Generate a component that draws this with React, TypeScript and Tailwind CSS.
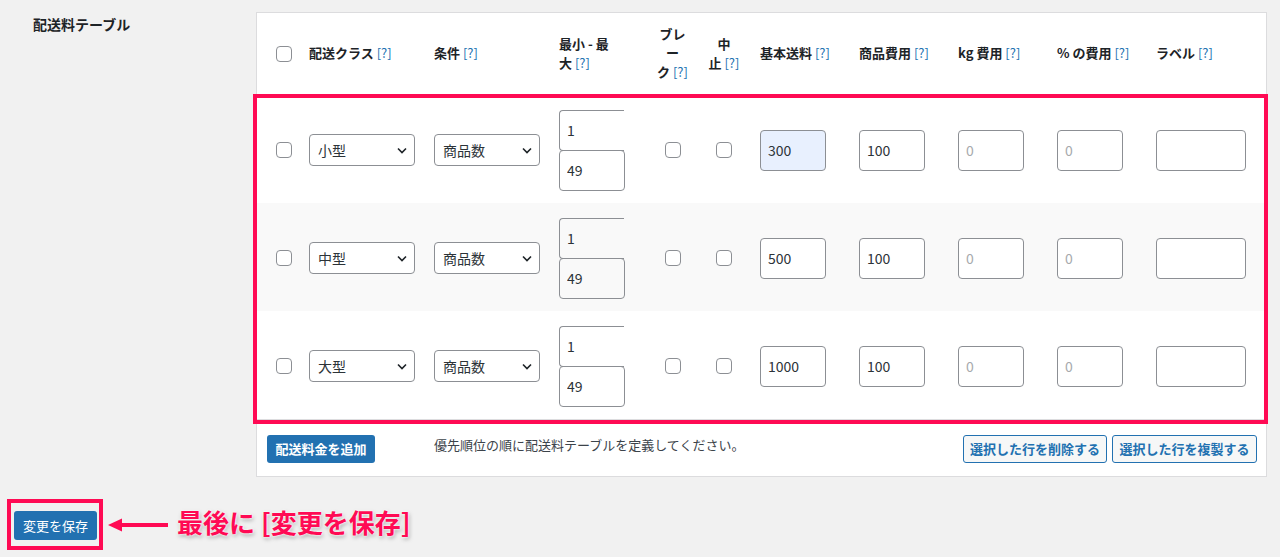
import React from "react";

const cols =
  "grid grid-cols-[52px_125px_125px_86px_55px_60px_99px_99px_99px_99px_1fr]";

const rows = [
  { cls: "小型", base: "300", autofill: true, bg: "bg-white" },
  { cls: "中型", base: "500", autofill: false, bg: "bg-[#f9f9f9]" },
  { cls: "大型", base: "1000", autofill: false, bg: "bg-white" },
];

function Help() {
  return <span className="font-normal text-[#2271b1]"> [?]</span>;
}

function Checkbox() {
  return (
    <div className="w-4 h-4 rounded-[4px] border border-[#8c8f94] bg-white" />
  );
}

function Select({ value }: { value: string }) {
  return (
    <div className="w-[106px] h-[32px] rounded-[4px] border border-[#8c8f94] bg-white flex items-center justify-between pl-[8px] pr-[6px] text-[14px] text-[#2c3338]">
      <span>{value}</span>
      <svg width="12" height="12" viewBox="0 0 12 12">
        <polyline
          points="2,4.5 6,8.5 10,4.5"
          fill="none"
          stroke="#1d2327"
          strokeWidth="1.6"
        />
      </svg>
    </div>
  );
}

function Field({
  value = "",
  placeholder,
  className = "",
}: {
  value?: string;
  placeholder?: string;
  className?: string;
}) {
  return (
    <input
      readOnly
      value={value}
      placeholder={placeholder}
      className={`h-[41px] rounded-[4px] border border-[#8c8f94] px-[7px] text-[14px] text-[#2c3338] placeholder:text-[#a7aaad] outline-none ${className}`}
    />
  );
}

export default function App() {
  return (
    <div className="min-h-[557px] bg-[#f1f1f1] pt-[12px] font-['Noto_Sans_CJK_JP',sans-serif] text-[#1d2327]">
      <div className="flex">
        <div className="w-[256px] pl-[33px] pt-[2px] text-[14px] leading-[20px] font-bold">
          配送料テーブル
        </div>
        <div className="w-[1011px] border border-[#dcdcde] bg-white">
          {/* header */}
          <div className={`${cols} h-[82px] pb-[3px] items-center text-[13px] leading-[19px] font-bold`}>
            <div className="pl-[19px] pt-[2px]">
              <Checkbox />
            </div>
            <div>
              配送クラス
              <Help />
            </div>
            <div>
              条件
              <Help />
            </div>
            <div>
              最小 - 最<br />大<Help />
            </div>
            <div className="text-center">
              ブレ<br />ー<br />ク<Help />
            </div>
            <div className="w-[48px] text-center">
              中<br />止<Help />
            </div>
            <div>
              基本送料
              <Help />
            </div>
            <div>
              商品費用
              <Help />
            </div>
            <div>
              kg 費用
              <Help />
            </div>
            <div>
              % の費用
              <Help />
            </div>
            <div>
              ラベル
              <Help />
            </div>
          </div>

          {/* body */}
          <div className="relative border-b border-[#dcdcde]">
            {rows.map((r) => (
              <div key={r.cls} className={`${cols} h-[108px] pt-[2px] items-center ${r.bg}`}>
                <div className="pl-[19px]">
                  <Checkbox />
                </div>
                <div>
                  <Select value={r.cls} />
                </div>
                <div>
                  <Select value="商品数" />
                </div>
                <div className="flex flex-col">
                  <Field value="1" className="w-[65px] h-[41px] border-r-0 rounded-r-none" />
                  <Field value="49" className="w-[66px] h-[40px] -mt-px" />
                </div>
                <div className="flex justify-center">
                  <Checkbox />
                </div>
                <div className="w-[48px] flex justify-center">
                  <Checkbox />
                </div>
                <div>
                  <Field
                    value={r.base}
                    className={`w-[66px] ${r.autofill ? "bg-[#e8f0fe]" : "bg-white"}`}
                  />
                </div>
                <div>
                  <Field value="100" className="w-[66px] bg-white" />
                </div>
                <div>
                  <Field placeholder="0" className="w-[66px] bg-white" />
                </div>
                <div>
                  <Field placeholder="0" className="w-[66px] bg-white" />
                </div>
                <div>
                  <Field className="w-[90px] bg-white" />
                </div>
              </div>
            ))}
            <div className="pointer-events-none absolute -top-px -left-[4px] -right-[2px] -bottom-[5px] border-[4px] border-[#ff0a54]" />
          </div>

          {/* footer */}
          <div className="flex items-start pt-[15px] pb-[13px] pl-[10px] pr-[9px]">
            <div className="h-[28px] w-[108px] rounded-[3px] bg-[#2271b1] text-white text-[13px] font-bold flex items-center justify-center">
              配送料金を追加
            </div>
            <div className="ml-[59px] text-[13px] leading-[19px] text-[#3c434a]">
              優先順位の順に配送料テーブルを定義してください。
            </div>
            <div className="ml-auto flex gap-[5px]">
              <div className="h-[28px] w-[144px] rounded-[3px] border border-[#2271b1] bg-[#f6f7f7] text-[#2271b1] text-[13px] font-bold flex items-center justify-center">
                選択した行を削除する
              </div>
              <div className="h-[28px] w-[145px] rounded-[3px] border border-[#2271b1] bg-[#f6f7f7] text-[#2271b1] text-[13px] font-bold flex items-center justify-center">
                選択した行を複製する
              </div>
            </div>
          </div>
        </div>
      </div>

      {/* save */}
      <div className="mt-[22px] pl-[7px] flex items-center">
        <div className="border-[4px] border-[#ff0a54] pt-[8px] pb-[6px] pl-[3px] pr-[2px]">
          <div className="h-[29px] w-[83px] rounded-[3px] bg-[#2271b1] text-white text-[13px] flex items-center justify-center">
            変更を保存
          </div>
        </div>
        <svg width="64" height="20" viewBox="0 0 64 20" className="ml-[4px]">
          <line x1="10" y1="10" x2="61" y2="10" stroke="#ff0a54" strokeWidth="4" />
          <polygon points="1,10 15,3.5 15,16.5" fill="#ff0a54" />
        </svg>
        <div className="ml-[6px] mb-[6px] text-[26px] leading-[32px] font-bold text-[#ff0a54] [text-shadow:0_0_2px_#fff,0_0_3px_#fff,1px_2px_4px_rgba(0,0,0,0.35)]">
          最後に [変更を保存]
        </div>
      </div>
    </div>
  );
}
